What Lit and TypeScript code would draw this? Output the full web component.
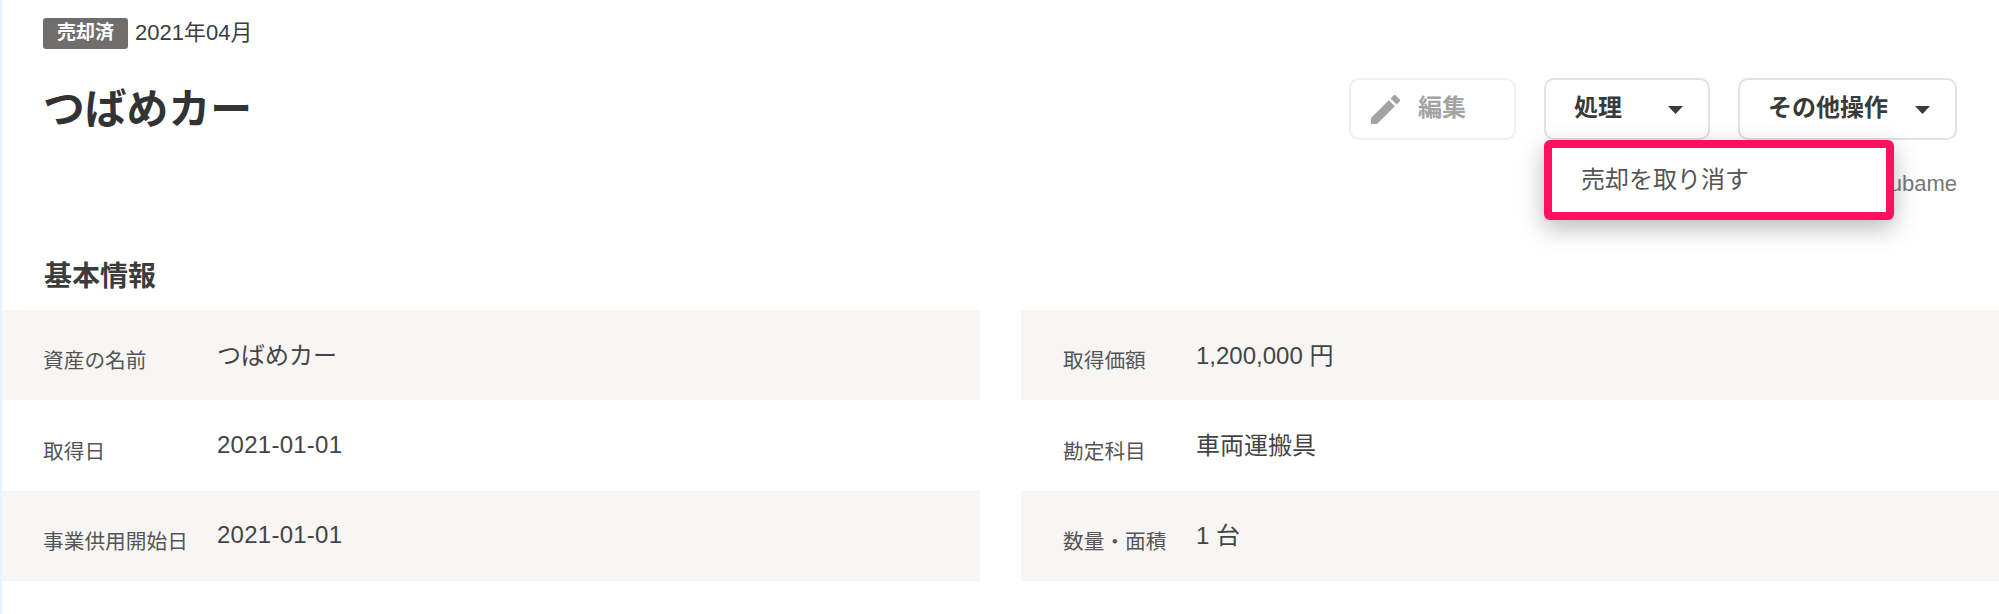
import { LitElement, html, css } from "lit";
import { customElement } from "lit/decorators.js";

const caret = (gap: number) => html`<svg class="caret" style="margin-left:${gap}px" width="15" height="8" viewBox="0 0 15 8"><path d="M0 0h15L7.5 8z" fill="#3a3a3a"/></svg>`;

const rows = [
  [["資産の名前", "つばめカー"], ["取得価額", "1,200,000 円"]],
  [["取得日", "2021-01-01"], ["勘定科目", "車両運搬具"]],
  [["事業供用開始日", "2021-01-01"], ["数量・面積", "1 台"]],
];

@customElement("app-root")
export class AppRoot extends LitElement {
  static styles = css`
    :host {
      display: block;
      width: 1999px;
      height: 614px;
      box-sizing: border-box;
      border-left: 2px solid #e6f2ff;
      background: #fff;
      overflow: hidden;
      font-family: "Liberation Sans", "Noto Sans CJK JP", sans-serif;
      color: #3a3a3a;
    }
    .meta { display: flex; align-items: center; gap: 7px; height: 31px; margin: 18px 0 0 41px; }
    .badge {
      box-sizing: border-box; background: #6f6e6c; color: #fff; font-size: 19px; font-weight: 700;
      height: 31px; line-height: 30px; padding: 0 14px 1px; border-radius: 3px;
    }
    .date { font-size: 22px; line-height: 26px; color: #3c3c3c; padding-bottom: 2px; }
    .head { display: flex; justify-content: space-between; align-items: center; margin-top: 29px; padding: 0 42px 0 41px; }
    h1 { margin: 0; padding-top: 2px; font-size: 41.8px; font-weight: 700; color: #333; line-height: 60px; }
    .actions { display: flex; gap: 28px; }
    .btn {
      box-sizing: border-box; height: 62px; display: flex; align-items: center;
      padding: 0 25px 0 28px; background: #fff; border: 2px solid #e2e2e2; border-radius: 10px;
      font-size: 24px; font-weight: 700; color: #3a3a3a; white-space: nowrap;
    }
    .btn span { padding-bottom: 8px; }
    .btn .caret { margin-top: 2px; }
    .btn.edit { border-color: #f0f0f0; color: #a3a3a3; padding: 0 48px 0 20px; }
    .btn.edit svg { margin-right: 18px; }
    .wrap { position: relative; }
    .menu {
      position: absolute; left: 0; top: 62px; width: 350px; height: 80px; box-sizing: border-box;
      border: 8px solid #ff0f5f; border-radius: 6px; background: #fff;
      box-shadow: 0 8px 24px rgba(0, 0, 0, 0.28);
      display: flex; align-items: center; padding: 0 0 6px 29px;
      font-size: 24px; color: #555; z-index: 2; white-space: nowrap;
    }
    .id { text-align: right; padding-right: 42px; margin-top: 31px; font-size: 22px; line-height: 26px; color: #777; }
    h2 { margin: 64px 0 0; padding: 0 0 0 42px; font-size: 28px; line-height: 32px; font-weight: 700; color: #3c3c3c; }
    .grid { display: grid; grid-template-columns: 978px 978px; column-gap: 41px; margin-top: 17px; }
    .cell { height: 90.4px; display: flex; align-items: center; padding-left: 41px; }
    .cell.r { padding-left: 42px; }
    .cell.alt { background: #f7f6f5; }
    .label { width: 174px; flex: none; font-size: 20.7px; color: #555; padding-top: 8px; }
    .cell.r .label { width: 133px; }
    .value { font-size: 24px; color: #444; padding-bottom: 4px; }
    .value.day { letter-spacing: 0.25px; padding-bottom: 2px; }
  `;

  render() {
    return html`
      <div class="meta"><span class="badge">売却済</span><span class="date">2021年04月</span></div>
      <div class="head">
        <h1>つばめカー</h1>
        <div class="actions">
          <div class="btn edit">
            <svg width="29" height="29" viewBox="3 3 18 18"><path fill="#a3a3a3" d="M3 17.25V21h3.75L17.81 9.94l-3.75-3.75L3 17.25zM20.71 7.04a1 1 0 0 0 0-1.41l-2.34-2.34a1 1 0 0 0-1.41 0l-1.83 1.83 3.75 3.75 1.83-1.83z"/></svg>
            <span>編集</span>
          </div>
          <div class="wrap">
            <div class="btn"><span>処理</span>${caret(46)}</div>
            <div class="menu">売却を取り消す</div>
          </div>
          <div class="btn"><span>その他操作</span>${caret(27)}</div>
        </div>
      </div>
      <div class="id">tsubame</div>
      <h2>基本情報</h2>
      <div class="grid">
        ${rows.map((row, i) => row.map((c, j) => html`
          <div class="cell ${i % 2 === 0 ? "alt" : ""} ${j ? "r" : ""}">
            <span class="label">${c[0]}</span><span class="value ${/^\d{4}-/.test(c[1]) ? "day" : ""}">${c[1]}</span>
          </div>`))}
      </div>
    `;
  }
}
